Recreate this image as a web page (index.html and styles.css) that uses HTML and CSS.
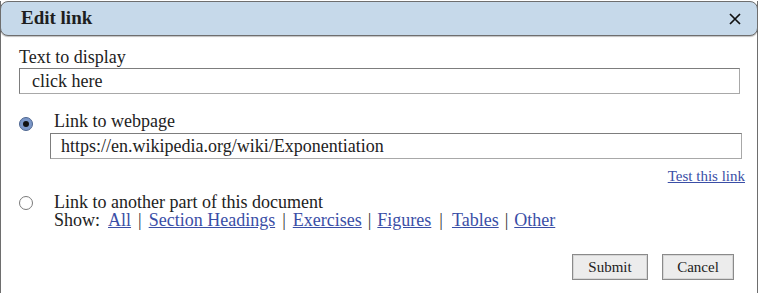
FILE: index.html
```html
<!DOCTYPE html>
<html lang="en">
<head>
    <meta charset="UTF-8">
    <title>Edit link</title>
    <link rel="stylesheet" href="styles.css">
</head>
<body>
    <div class="dialog">
        <div class="dialog-header">
            <h2>Edit link</h2>
            <svg class="close" width="12" height="12" viewBox="0 0 12 12">
                <path d="M1 1 L11 11 M11 1 L1 11" stroke="#111" stroke-width="1.7" fill="none"/>
            </svg>
        </div>

        <div class="dialog-body">
            <label class="field-label">Text to display</label>
            <div class="text-box text-box-wide">click here</div>

            <div class="option option-web">
                <span class="radio radio-on"></span>
                <div class="option-main">
                    <div class="option-title">Link to webpage</div>
                    <div class="text-box">https://en.wikipedia.org/wiki/Exponentiation</div>
                    <div class="test-row"><a href="#">Test this link</a></div>
                </div>
            </div>

            <div class="option option-doc">
                <span class="radio"></span>
                <div class="option-main">
                    <div class="option-title">Link to another part of this document</div>
                    <div class="show-row">
                        Show:&nbsp; <a href="#">All</a><span class="sep sep-mid">|</span><a href="#">Section Headings</a><span class="sep sep-mid">|</span><a href="#">Exercises</a><span class="sep">|</span><a href="#">Figures</a><span class="sep sep-wide">|</span><a href="#">Tables</a><span class="sep">|</span><a href="#">Other</a>
                    </div>
                </div>
            </div>

            <div class="buttons">
                <button class="btn-submit">Submit</button>
                <button class="btn-cancel">Cancel</button>
            </div>
        </div>
    </div>
</body>
</html>
```

FILE: styles.css
```css
body {
    margin: 0;
    font-family: "Liberation Serif", "Times New Roman", serif;
    font-size: 18px;
    color: #222;
    background: #fff;
}
.dialog {
    width: 758px;
    height: 293px;
    box-sizing: border-box;
    border: 1px solid #6e6e6e;
    border-top: none;
}
.dialog-header {
    height: 35px;
    margin: 1px -1px 0 -1px;
    box-sizing: border-box;
    background: #c6d9ea;
    border: 1px solid #6e6e6e;
    border-radius: 8px;
    box-shadow: 0 1px 1px rgba(0,0,0,0.25);
    display: flex;
    align-items: center;
    justify-content: space-between;
    padding: 0 16px 0 20px;
}
.dialog-header h2 {
    margin: 0;
    font-size: 19px;
    font-weight: bold;
    color: #1e1e1e;
    padding-bottom: 1px;
}
.close {
    display: block;
    margin-top: 1px;
}
.dialog-body {
    padding: 11px 16px 0 17px;
}
.field-label {
    display: block;
    line-height: 20px;
    margin-left: 1px;
}
.text-box {
    height: 26px;
    box-sizing: border-box;
    border: 1px solid #7d7d7d;
    border-bottom-color: #a8a8a8;
    border-right-color: #a8a8a8;
    padding: 2px 0 0 10px;
    line-height: 20px;
}
.text-box-wide {
    margin: 1px 1px 0 1px;
    padding-left: 12px;
}
.option {
    display: flex;
    align-items: flex-start;
}
.option-web {
    margin-top: 17px;
}
.option-doc {
    margin-top: 8px;
}
.radio {
    width: 14px;
    height: 14px;
    box-sizing: border-box;
    border: 1px solid #7a7a7a;
    border-radius: 50%;
    background: #fff;
    margin: 3px 0 0 1px;
    flex-shrink: 0;
    display: flex;
    align-items: center;
    justify-content: center;
}
.radio-on {
    margin-top: 6px;
    background: #7b97c8;
    border-color: #4e6690;
}
.radio-on::after {
    content: "";
    width: 6px;
    height: 6px;
    border-radius: 50%;
    background: #111;
}
.option-main {
    flex: 1;
    margin-left: 21px;
}
.option-web .option-main {
    margin-left: 17px;
}
.option-web .option-title {
    margin-left: 4px;
    line-height: 20px;
}
.option-title {
    line-height: 18px;
}
.option-web .text-box {
    margin-top: 2px;
    margin-right: -1px;
}
.test-row {
    text-align: right;
    margin-right: -4px;
    margin-top: 9px;
    font-size: 15px;
    line-height: 17px;
}
a {
    color: #3a4ea6;
}
.show-row {
    line-height: 18px;
}
.sep {
    margin: 0 6px;
    color: #333;
}
.sep-mid {
    margin: 0 7px;
}
.sep-wide {
    margin: 0 9px 0 8px;
}
.buttons {
    display: flex;
    justify-content: flex-end;
    gap: 14px;
    margin-top: 25px;
    margin-right: 7px;
}
button {
    font-family: "Liberation Serif", "Times New Roman", serif;
    font-size: 15px;
    color: #222;
    background: #ececec;
    border: 1px solid #8a8a8a;
    box-shadow: inset 0 0 0 1px #d6d6d6;
    height: 26px;
    padding: 0;
    cursor: pointer;
}
.btn-submit {
    width: 76px;
}
.btn-cancel {
    width: 72px;
}
```
